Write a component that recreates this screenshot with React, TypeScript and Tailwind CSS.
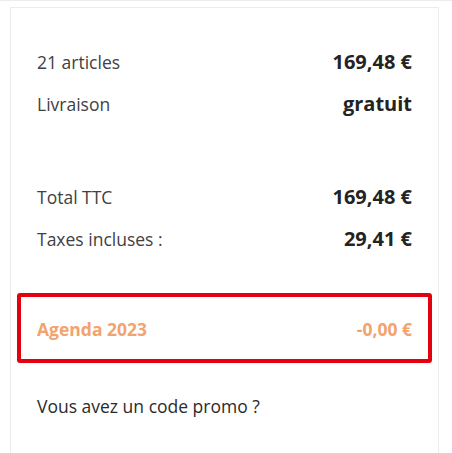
export default function App() {
  const font = { fontFamily: '"Open Sans", "Noto Sans", sans-serif' }
  return (
    <div className="h-[453px] w-[452px] overflow-hidden border-t border-[#ececec] bg-white" style={font}>
      <div className="ml-[10px] mt-[6px] h-[460px] w-[429px] border border-[#ececec] bg-white px-[6px] pt-[33px]">
        <div className="px-[20px]">
          <div className="flex h-[42px] items-center justify-between">
            <span className="text-[17.5px] text-[#414141]">21 articles</span>
            <span className="text-[20px] font-bold text-[#232323]">169,48 €</span>
          </div>
          <div className="flex h-[42px] items-center justify-between">
            <span className="text-[17.5px] text-[#414141]">Livraison</span>
            <span className="text-[20px] font-bold text-[#232323]">gratuit</span>
          </div>
          <div className="mt-[51px] flex h-[42px] items-center justify-between">
            <span className="text-[17.5px] text-[#414141]">Total TTC</span>
            <span className="text-[20px] font-bold text-[#232323]">169,48 €</span>
          </div>
          <div className="flex h-[42px] items-center justify-between">
            <span className="text-[17.5px] text-[#414141]">Taxes incluses :</span>
            <span className="text-[20px] font-bold text-[#232323]">29,41 €</span>
          </div>
        </div>
        <div className="mt-[33px] flex h-[70px] items-center justify-between rounded-[3px] border-4 border-[#e3000f] px-[16px] pt-[3px] text-[17.5px] font-bold text-[#f2a36e]">
          <span>Agenda 2023</span>
          <span>-0,00 €</span>
        </div>
        <div className="mt-[30px] px-[20px] text-[17.5px] text-[#2b2b2b]">Vous avez un code promo ?</div>
      </div>
    </div>
  )
}
